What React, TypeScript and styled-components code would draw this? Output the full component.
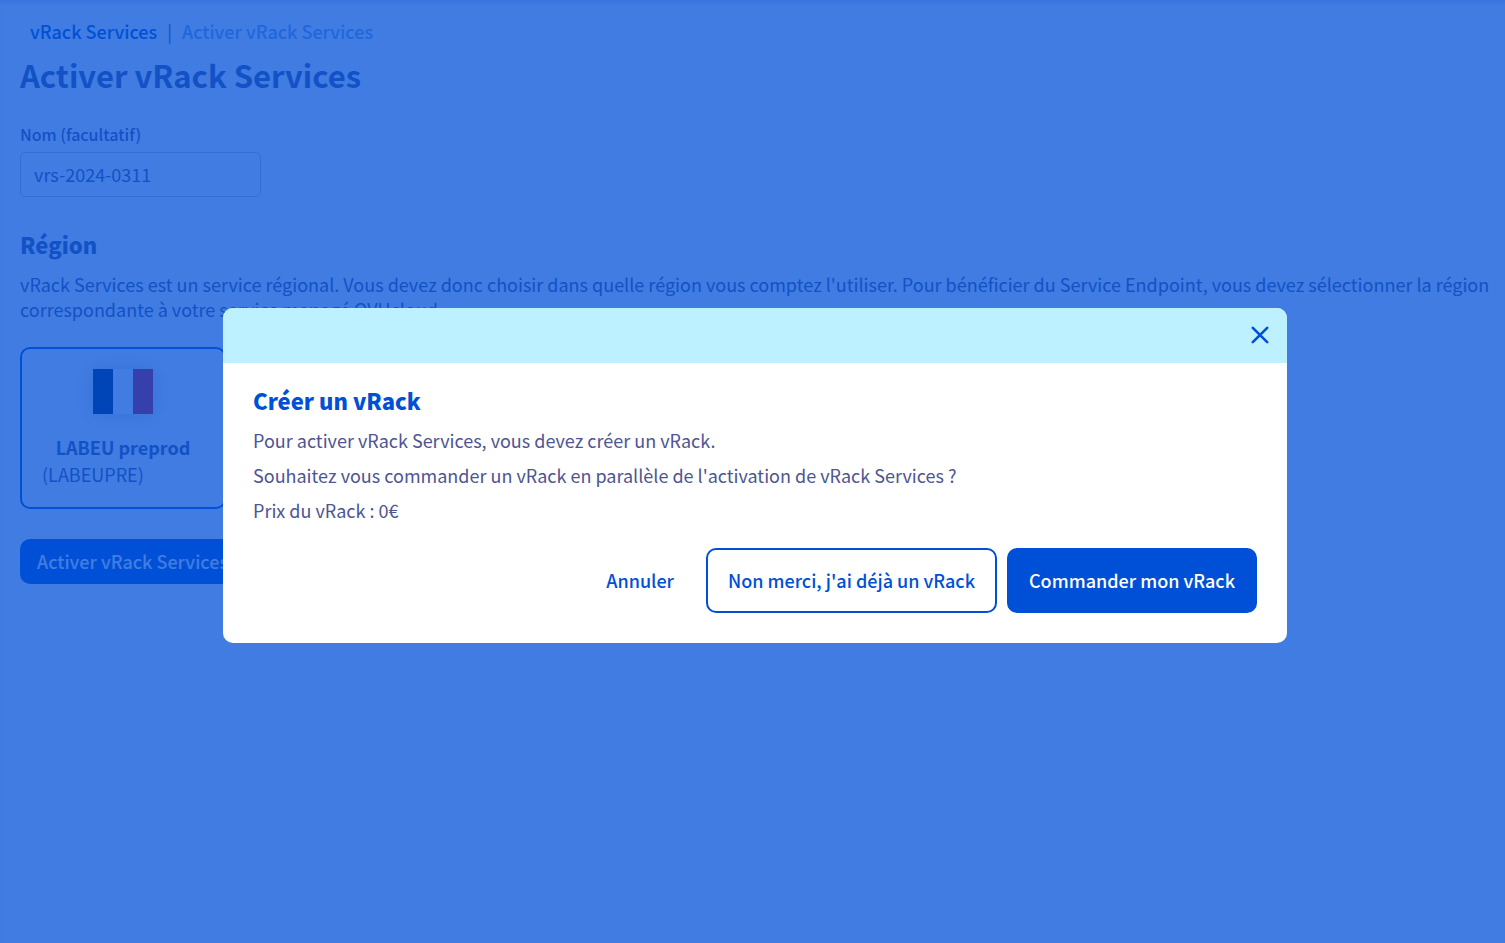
import React from "react";
import styled, { createGlobalStyle } from "styled-components";

const GlobalStyle = createGlobalStyle`
  *, *::before, *::after { box-sizing: border-box; }
  body {
    margin: 0;
    background: #ffffff;
    color: #4d5592;
    font-family: "Source Sans Pro", "Noto Sans CJK SC", "Noto Sans", sans-serif;
    font-size: 18px;
    line-height: 25px;
  }
  h1, h2, p { margin: 0; }
  button, input { font: inherit; }
`;

const Page = styled.main`
  min-height: 100vh;
  padding: 19px 10px 20px 20px;
  display: flex;
  flex-direction: column;
  align-items: flex-start;
  box-shadow: inset 0 5px 6px -4px rgba(0, 14, 156, 0.2);
`;

const Breadcrumb = styled.nav`
  display: flex;
  gap: 10px;
  padding: 0 10px;
  font-weight: 500;
`;

const Crumb = styled.a`
  color: #0050d7;
  text-decoration: none;
`;

const Separator = styled.span`
  color: #4d5592;
  font-weight: 400;
`;

const CurrentCrumb = styled.span`
  color: #80a8eb;
`;

const PageTitle = styled.h1`
  margin-top: 10px;
  font-size: 31px;
  line-height: 42px;
  font-weight: 700;
`;

const Field = styled.div`
  display: flex;
  flex-direction: column;
  gap: 5px;
  margin-top: 26px;
`;

const FieldLabel = styled.label`
  font-size: 16px;
  font-weight: 500;
`;

const TextInput = styled.input`
  width: 241px;
  height: 45px;
  padding: 0 13px 2px;
  border: 1px solid #c4c8de;
  border-radius: 5px;
  background: transparent;
  color: #4d5592;
  outline: none;
`;

const SectionTitle = styled.h2<{ $accent?: boolean }>`
  font-size: 22px;
  line-height: 30px;
  font-weight: 900;
  color: ${(p) => (p.$accent ? "#0050d7" : "#4d5592")};
`;

const Region = styled.section`
  display: flex;
  flex-direction: column;
  align-items: flex-start;
  margin-top: 32px;
`;

const RegionText = styled.p`
  margin-top: 13px;
`;

const RegionCard = styled.label`
  display: flex;
  flex-direction: column;
  align-items: center;
  width: 206px;
  margin-top: 25px;
  padding: 20px;
  border: 2px solid #0050d7;
  border-radius: 10px;
`;

const HiddenRadio = styled.input`
  appearance: none;
  position: absolute;
  margin: 0;
  opacity: 0;
`;

const Flag = styled.svg`
  display: block;
  width: 60px;
  height: 45px;
  margin-bottom: 21px;
  box-shadow: 0 0 20px rgba(0, 14, 80, 0.2);
`;

const RegionName = styled.strong`
  font-weight: 700;
`;

const RegionCode = styled.span`
  align-self: flex-start;
  margin-top: 2px;
`;

const SubmitButton = styled.button`
  height: 45px;
  margin-top: 30px;
  padding: 0 17px;
  border: 0;
  border-radius: 10px;
  background: #0050d7;
  color: #ffffff;
  font-weight: 500;
`;

const Backdrop = styled.div`
  position: fixed;
  inset: 0;
  display: flex;
  align-items: center;
  justify-content: center;
  padding: 8px 0 0 5px;
  background: rgba(0, 80, 215, 0.75);
`;

const Dialog = styled.div`
  width: calc(100% - 40px);
  max-width: 1064px;
  border-radius: 10px;
  background: #ffffff;
  overflow: hidden;
`;

const DialogHeader = styled.header`
  display: flex;
  justify-content: flex-end;
  padding: 9px 10px 11px;
  background: #bef1ff;
`;

const CloseButton = styled.button`
  display: grid;
  place-items: center;
  width: 35px;
  height: 35px;
  padding: 0;
  border: 0;
  background: transparent;
  color: #0050d7;
`;

const DialogBody = styled.div`
  padding: 22px 30px 30px;
`;

const DialogText = styled.div`
  display: flex;
  flex-direction: column;
  gap: 10px;
  margin-top: 13px;
`;

const Actions = styled.div`
  display: flex;
  justify-content: flex-end;
  gap: 10px;
  margin-top: 25px;
`;

const ActionButton = styled.button<{ $variant: "ghost" | "outline" | "solid" }>`
  height: 65px;
  padding: 0 20px;
  border: 2px solid ${(p) => (p.$variant === "ghost" ? "transparent" : "#0050d7")};
  border-radius: 10px;
  background: ${(p) => (p.$variant === "solid" ? "#0050d7" : "transparent")};
  color: ${(p) => (p.$variant === "solid" ? "#ffffff" : "#0050d7")};
  font-weight: 500;
`;

export default function App() {
  return (
    <>
      <GlobalStyle />
      <Page>
        <Breadcrumb aria-label="Fil d'Ariane">
          <Crumb href="#vrack-services">vRack Services</Crumb>
          <Separator>|</Separator>
          <CurrentCrumb aria-current="page">Activer vRack Services</CurrentCrumb>
        </Breadcrumb>
        <PageTitle>Activer vRack Services</PageTitle>
        <Field>
          <FieldLabel htmlFor="name">Nom (facultatif)</FieldLabel>
          <TextInput id="name" type="text" defaultValue="vrs-2024-0311" />
        </Field>
        <Region>
          <SectionTitle>Région</SectionTitle>
          <RegionText>
            vRack Services est un service régional. Vous devez donc choisir dans quelle région vous comptez
            l'utiliser. Pour bénéficier du Service Endpoint, vous devez sélectionner la région correspondante à
            votre service managé OVHcloud.
          </RegionText>
          <RegionCard>
            <HiddenRadio type="radio" name="region" value="LABEUPRE" defaultChecked />
            <Flag viewBox="0 0 60 45" aria-hidden="true">
              <rect width="20" height="45" fill="#00245c" />
              <rect x="20" width="20" height="45" fill="#ffffff" />
              <rect x="40" width="20" height="45" fill="#d8102c" />
            </Flag>
            <RegionName>LABEU preprod</RegionName>
            <RegionCode>(LABEUPRE)</RegionCode>
          </RegionCard>
        </Region>
        <SubmitButton type="button">Activer vRack Services</SubmitButton>
      </Page>
      <Backdrop>
        <Dialog role="dialog" aria-modal="true" aria-labelledby="dialog-title">
          <DialogHeader>
            <CloseButton type="button" aria-label="Fermer">
              <svg width="18" height="18" viewBox="0 0 18 18" aria-hidden="true">
                <path
                  d="M1.8 1.8 16.2 16.2M16.2 1.8 1.8 16.2"
                  fill="none"
                  stroke="currentColor"
                  strokeWidth="2.6"
                  strokeLinecap="round"
                />
              </svg>
            </CloseButton>
          </DialogHeader>
          <DialogBody>
            <SectionTitle id="dialog-title" $accent>
              Créer un vRack
            </SectionTitle>
            <DialogText>
              <p>Pour activer vRack Services, vous devez créer un vRack.</p>
              <p>Souhaitez vous commander un vRack en parallèle de l'activation de vRack Services ?</p>
              <p>Prix du vRack : 0€</p>
            </DialogText>
            <Actions>
              <ActionButton type="button" $variant="ghost">
                Annuler
              </ActionButton>
              <ActionButton type="button" $variant="outline">
                Non merci, j'ai déjà un vRack
              </ActionButton>
              <ActionButton type="button" $variant="solid">
                Commander mon vRack
              </ActionButton>
            </Actions>
          </DialogBody>
        </Dialog>
      </Backdrop>
    </>
  );
}
